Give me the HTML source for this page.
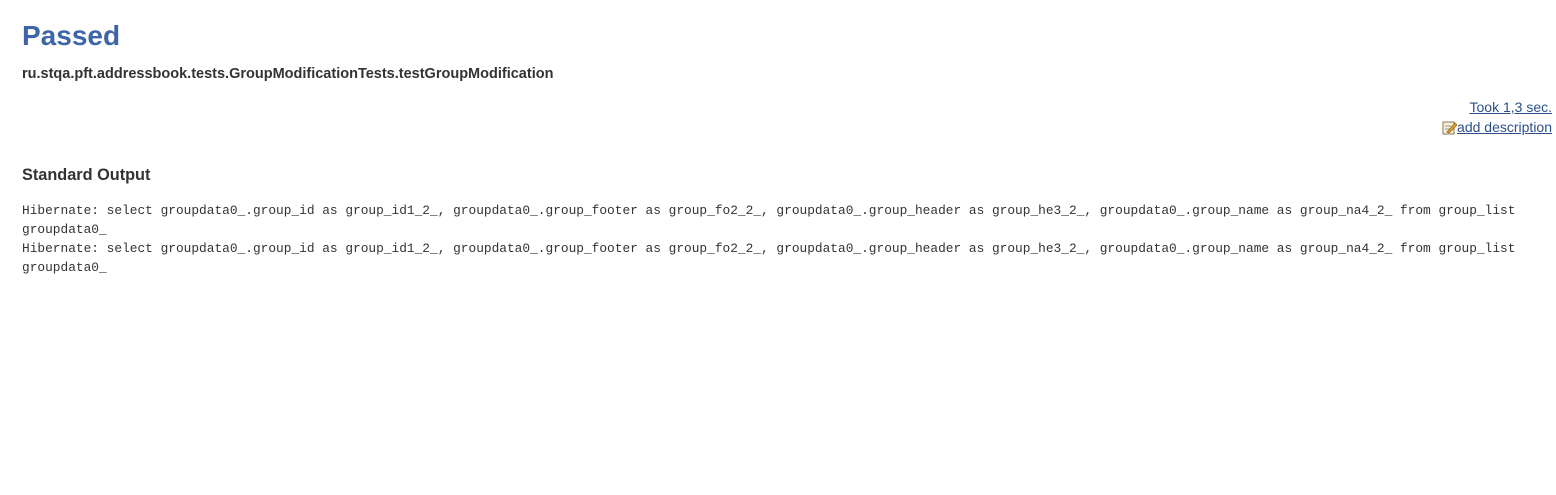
<!DOCTYPE html>
<html><head><style>
body{margin:0;background:#fff;font-family:"Liberation Sans",Arial,sans-serif;color:#333;}
h1{position:absolute;left:22px;top:18px;margin:0;font-size:28px;font-weight:bold;color:#3e65a8;line-height:36px;}
.cls{position:absolute;left:22px;top:66px;font-size:14.5px;font-weight:bold;color:#333;}
.r{position:absolute;right:4px;text-align:right;font-size:14px;line-height:20px;}
.r a{color:#2d4f8a;text-decoration:underline;}
h3{position:absolute;left:22px;top:166px;margin:0;font-size:16.3px;font-weight:bold;color:#333;}
pre{position:absolute;left:22px;top:201px;margin:0;font-family:"Liberation Mono",monospace;font-size:12.83px;line-height:19px;color:#333;}
</style></head><body>
<h1>Passed</h1>
<div class="cls">ru.stqa.pft.addressbook.tests.GroupModificationTests.testGroupModification</div>
<div class="r" style="top:97px"><a>Took 1,3 sec.</a></div>
<div class="r" style="top:117px"><svg width="15" height="15" viewBox="0 0 15 15" style="vertical-align:-3px"><rect x="1" y="2" width="11" height="12" fill="#f5f0d8" stroke="#8a7a50"/><line x1="3" y1="6" x2="9" y2="6" stroke="#999"/><line x1="3" y1="9" x2="9" y2="9" stroke="#999"/><path d="M5 12 L13 3 L15 5 L7 13 Z" fill="#e8a020" stroke="#8a5a10" stroke-width=".7"/></svg><a>add description</a></div>
<h3>Standard Output</h3>
<pre>Hibernate: select groupdata0_.group_id as group_id1_2_, groupdata0_.group_footer as group_fo2_2_, groupdata0_.group_header as group_he3_2_, groupdata0_.group_name as group_na4_2_ from group_list
groupdata0_
Hibernate: select groupdata0_.group_id as group_id1_2_, groupdata0_.group_footer as group_fo2_2_, groupdata0_.group_header as group_he3_2_, groupdata0_.group_name as group_na4_2_ from group_list
groupdata0_</pre>
</body></html>
